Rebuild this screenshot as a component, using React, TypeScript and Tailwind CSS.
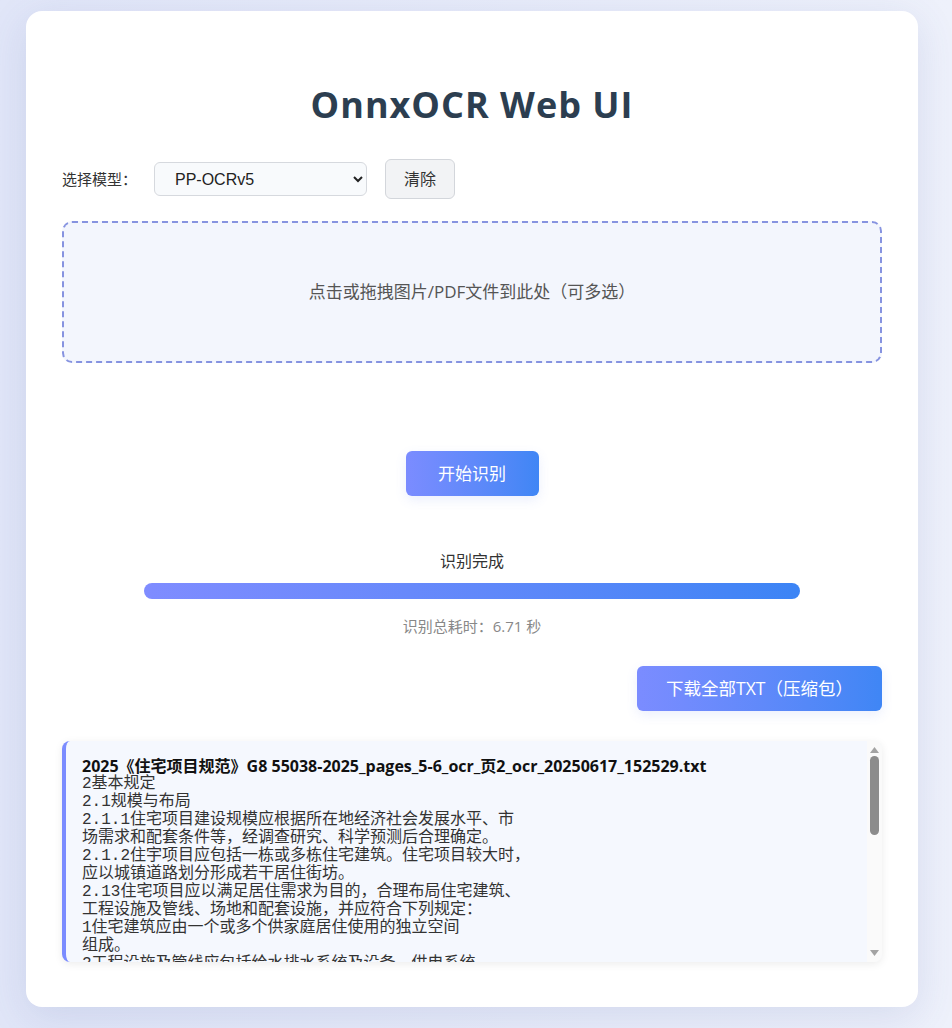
import React from 'react';

const RESULT_TITLE = '2025《住宅项目规范》G8 55038-2025_pages_5-6_ocr_页2_ocr_20250617_152529.txt';

const RESULT_BODY = `2基本规定
2.1规模与布局
2.1.1住宅项目建设规模应根据所在地经济社会发展水平、市
场需求和配套条件等，经调查研究、科学预测后合理确定。
2.1.2住宇项目应包括一栋或多栋住宅建筑。住宅项目较大时，
应以城镇道路划分形成若干居住街坊。
2.13住宅项目应以满足居住需求为目的，合理布局住宅建筑、
工程设施及管线、场地和配套设施，并应符合下列规定：
1住宅建筑应由一个或多个供家庭居住使用的独立空间
组成。
2工程设施及管线应包括给水排水系统及设备、供电系统、
照明系统、燃气系统、通信系统及设备等。
3场地应包括道路、停车场、绿地和室外活动场地等。`;

const FakeScrollbar: React.FC = () => (
  <div className="w-[15px] shrink-0 bg-[#fafafa] flex flex-col items-center py-[6px]">
    <svg width="9" height="6" viewBox="0 0 9 6" className="shrink-0">
      <path d="M4.5 0L9 6H0z" fill="#a3a3a3" />
    </svg>
    <div className="mt-[3px] w-[9px] h-[79px] rounded-full bg-[#8c8c8c]" />
    <div className="flex-1" />
    <svg width="9" height="6" viewBox="0 0 9 6" className="shrink-0">
      <path d="M0 0h9L4.5 6z" fill="#a3a3a3" />
    </svg>
  </div>
);

const App: React.FC = () => {
  return (
    <div className="min-h-screen bg-gradient-to-r from-[#e1e6f8] to-[#eef1fb] pt-[11px] pb-5 font-['Open_Sans','Noto_Sans_CJK_SC',sans-serif]">
      <div className="ml-[26px] mr-[34px] bg-white rounded-2xl shadow-[0_10px_40px_rgba(70,90,160,0.14)] px-9 pt-[72px] pb-[45px]">
        {/* Header */}
        <h1 className="text-center text-[36px] leading-[43px] font-bold tracking-[1px] text-[#2c3e50]">
          OnnxOCR Web UI
        </h1>

        {/* Model select */}
        <div className="mt-[33px] flex items-center h-10">
          <label className="text-[15px] text-[#333] w-[92px]">选择模型：</label>
          <select className="w-[213px] h-[34px] rounded-md border border-[#d6d9de] bg-[#f8fafc] pl-4 pr-2 text-[16px] text-[#222] font-['Liberation_Sans',sans-serif]">
            <option>PP-OCRv5</option>
            <option>PP-OCRv4</option>
          </select>
          <button className="ml-[18px] w-[70px] h-10 rounded-md border border-[#d3d6db] bg-[#f2f3f5] text-[16px] text-[#333]">
            清除
          </button>
        </div>

        {/* Drop zone */}
        <div className="mt-[22px] h-[142px] rounded-[10px] border-2 border-dashed border-[#8693e0] bg-[#f3f6fd] flex items-center justify-center">
          <span className="text-[17px] text-[#555]">点击或拖拽图片/PDF文件到此处（可多选）</span>
        </div>

        {/* Start */}
        <div className="mt-[88px] flex justify-center">
          <button className="w-[133px] h-[45px] rounded-md bg-gradient-to-r from-[#7b8cff] to-[#3f86f5] text-white text-[17px] shadow-[0_4px_12px_rgba(90,120,240,0.12)]">
            开始识别
          </button>
        </div>

        {/* Progress */}
        <div className="mt-[54px] text-center text-[16px] leading-[22px] text-[#333]">识别完成</div>
        <div className="mt-[11px] mx-auto w-[656px] h-4 rounded-full bg-gradient-to-r from-[#7f8cff] to-[#3b84f5]" />
        <div className="mt-[17px] text-center text-[15px] leading-5 text-[#888]">识别总耗时：6.71 秒</div>

        {/* Download */}
        <div className="mt-[30px] flex justify-end">
          <button className="w-[245px] h-[45px] rounded-md bg-gradient-to-r from-[#7b8cff] to-[#3f86f5] text-white text-[17.5px] shadow-[0_4px_12px_rgba(90,120,240,0.12)]">
            下载全部TXT（压缩包）
          </button>
        </div>

        {/* Results */}
        <div className="mt-[30px] h-[221px] flex rounded-lg border-l-4 border-[#7b8cff] bg-[#f5f8fe] overflow-hidden shadow-[0_2px_8px_rgba(0,0,0,0.08)]">
          <div className="flex-1 overflow-hidden pl-4 pr-4 pt-4">
            <div className="text-[16px] leading-[18px] font-bold text-[#111]">{RESULT_TITLE}</div>
            <pre className="whitespace-pre-wrap text-[16px] leading-[18px] text-[#333] font-['Liberation_Mono','Noto_Sans_CJK_SC',monospace]">
              {RESULT_BODY}
            </pre>
          </div>
          <FakeScrollbar />
        </div>
      </div>
    </div>
  );
};

export default App;
